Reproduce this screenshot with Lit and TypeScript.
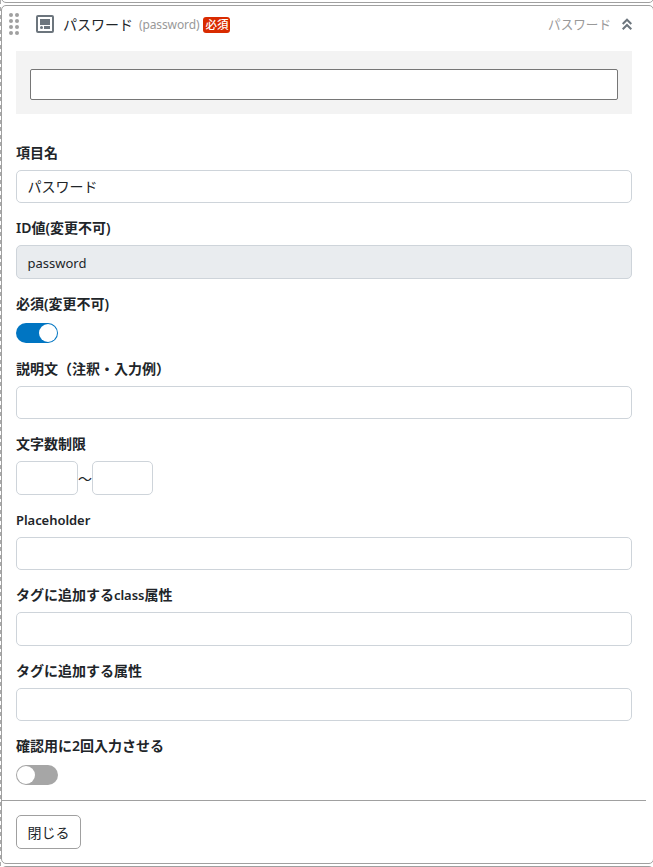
import { LitElement, html, css, svg, nothing } from "lit";
import { customElement, property } from "lit/decorators.js";

@customElement("toggle-switch")
class ToggleSwitch extends LitElement {
  @property({ type: Boolean, reflect: true }) on = false;
  static styles = css`
    :host { display: flex; box-sizing: border-box; width: 42px; height: 20px; margin-top: 2px; padding: 1px; border-radius: 10px; background: #a6a6a6; }
    :host([on]) { background: #0075c2; justify-content: flex-end; }
    .knob { width: 18px; height: 18px; border-radius: 50%; background: #fff; }
  `;
  render() { return html`<span class="knob"></span>`; }
}

@customElement("form-field")
class FormField extends LitElement {
  @property() label = "";
  static styles = css`
    :host { display: flex; flex-direction: column; }
    .label { height: 21px; line-height: 21px; margin-bottom: 7px; font-size: 14px; font-weight: 600; white-space: nowrap; }
    .latin { font-size: 13px; letter-spacing: -0.05px; }
  `;
  render() {
    const parts = this.label.split(/([A-Za-z]{3,})/).filter(Boolean);
    return html`<div class="label">${parts.map((p) => (/^[A-Za-z]{3,}$/.test(p) ? html`<span class="latin">${p}</span>` : p))}</div><slot></slot>`;
  }
}

@customElement("app-root")
class AppRoot extends LitElement {
  static styles = css`
    :host {
      display: block; position: relative; box-sizing: border-box; width: 653px; height: 867px; overflow: hidden; background: #fff; color: #212529;
      font: 14px/21px "Noto Sans", "Noto Sans CJK JP", sans-serif;
    }
    * { box-sizing: border-box; }
    .rail { position: absolute; left: 0; top: 0; width: 1px; height: 867px; background: repeating-linear-gradient(#aaa 0 4px, #fff 4px 7.5px); }
    .stack { display: flex; flex-direction: column; gap: 2px; margin: -17px 0 0 1px; width: 653px; }
    .card { flex: none; border: 1px solid #a0a0a0; border-radius: 5px; background: #fff; }
    .edge { height: 20px; }
    .main { height: 859px; }
    .head { display: flex; align-items: center; height: 45px; padding: 0 21px 9px 7px; }
    .grip { width: 10px; height: 22px; flex: none; }
    .kind { width: 18px; height: 18px; margin-left: 17px; flex: none; }
    .title { margin-left: 9px; }
    .key { margin-left: 6px; color: #999; font-size: 12px; letter-spacing: -0.12px; }
    .badge { margin: 2px 0 0 4px; width: 27px; height: 16px; border-radius: 3px; background: #d92b00; color: #fff; font-size: 11.5px; line-height: 16px; text-align: center; font-weight: 500; }
    .type { margin-left: auto; color: #999; font-size: 12.6px; }
    .chev { width: 10px; height: 12px; margin-left: 11px; }
    .preview { display: flex; margin: 0 20px 0 14px; width: 616px; height: 63px; padding: 18px 14px 14px; background: #f3f3f3; }
    .raw { flex: 1; height: 31px; border: 1px solid #767676; border-radius: 2px; background: #fff; }
    .fields { display: flex; flex-direction: column; width: 616px; margin: 28px 0 0 14px; }
    .box { height: 33px; border: 1px solid #ced4da; border-radius: 5px; padding: 0 10.5px; line-height: 31px; }
    .tall { height: 34px; }
    .disabled { background: #e9ecef; font-size: 13px; line-height: 34px; }
    .range { display: flex; align-items: center; }
    .range .box { width: 62px; }
    .range .box:last-child { width: 61px; }
    .tilde { width: 14px; text-align: center; }
    .foot { width: 644px; margin-top: 15px; border-top: 1px solid #a0a0a0; padding: 14px; }
    .close { display: block; width: 65px; height: 34px; padding: 0; border: 1px solid #a0a0a0; border-radius: 5px; background: #fff; color: inherit; font: inherit; }
    .g14 { margin-bottom: 14px; }
    .g15 { margin-bottom: 15px; }
  `;
  private field(label: string, tall = false, value = "", disabled = false) {
    return html`<form-field class="g14" label=${label}>
      <div class="box ${tall ? "tall" : ""} ${disabled ? "disabled" : ""}">${value || nothing}</div></form-field>`;
  }
  render() {
    return html`
      <div class="rail"></div>
      <div class="stack">
        <div class="card edge"></div>
        <div class="card main">
          <div class="head">
            <svg class="grip" viewBox="0 0 10 22" fill="#a0a0a0">
              ${[2, 8].map((x) => [2, 8, 14, 20].map((y) => svg`<circle cx=${x} cy=${y} r="2"/>`))}
            </svg>
            <svg class="kind" viewBox="0 0 18 18">
              <rect x="1" y="1" width="16" height="16" rx="1" fill="none" stroke="#6c757d" stroke-width="2"/>
              <path d="M4 4h10v6H4zM8 11h6v3H8z" fill="#6c757d"/><circle cx="5.5" cy="12.5" r="1.5" fill="#6c757d"/>
            </svg>
            <span class="title">パスワード</span><span class="key">(password)</span><span class="badge">必須</span>
            <span class="type">パスワード</span>
            <svg class="chev" viewBox="0 0 10 12" fill="none" stroke="#6c757d" stroke-width="2"><path d="M.7 6 5 1.7 9.3 6M.7 11.3 5 7l4.3 4.3"/></svg>
          </div>
          <div class="preview"><div class="raw"></div></div>
          <div class="fields">
            ${this.field("項目名", false, "パスワード")}
            ${this.field("ID値(変更不可)", true, "password", true)}
            <form-field class="g15" label="必須(変更不可)"><toggle-switch on></toggle-switch></form-field>
            ${this.field("説明文（注釈・入力例）")}
            <form-field class="g14" label="文字数制限"><div class="range"><div class="box tall"></div><span class="tilde">～</span><div class="box tall"></div></div></form-field>
            ${this.field("Placeholder")}
            ${this.field("タグに追加するclass属性", true)}
            ${this.field("タグに追加する属性")}
            <form-field label="確認用に2回入力させる"><toggle-switch></toggle-switch></form-field>
          </div>
          <div class="foot"><button class="close">閉じる</button></div>
        </div>
        <div class="card edge"></div>
      </div>`;
  }
}
